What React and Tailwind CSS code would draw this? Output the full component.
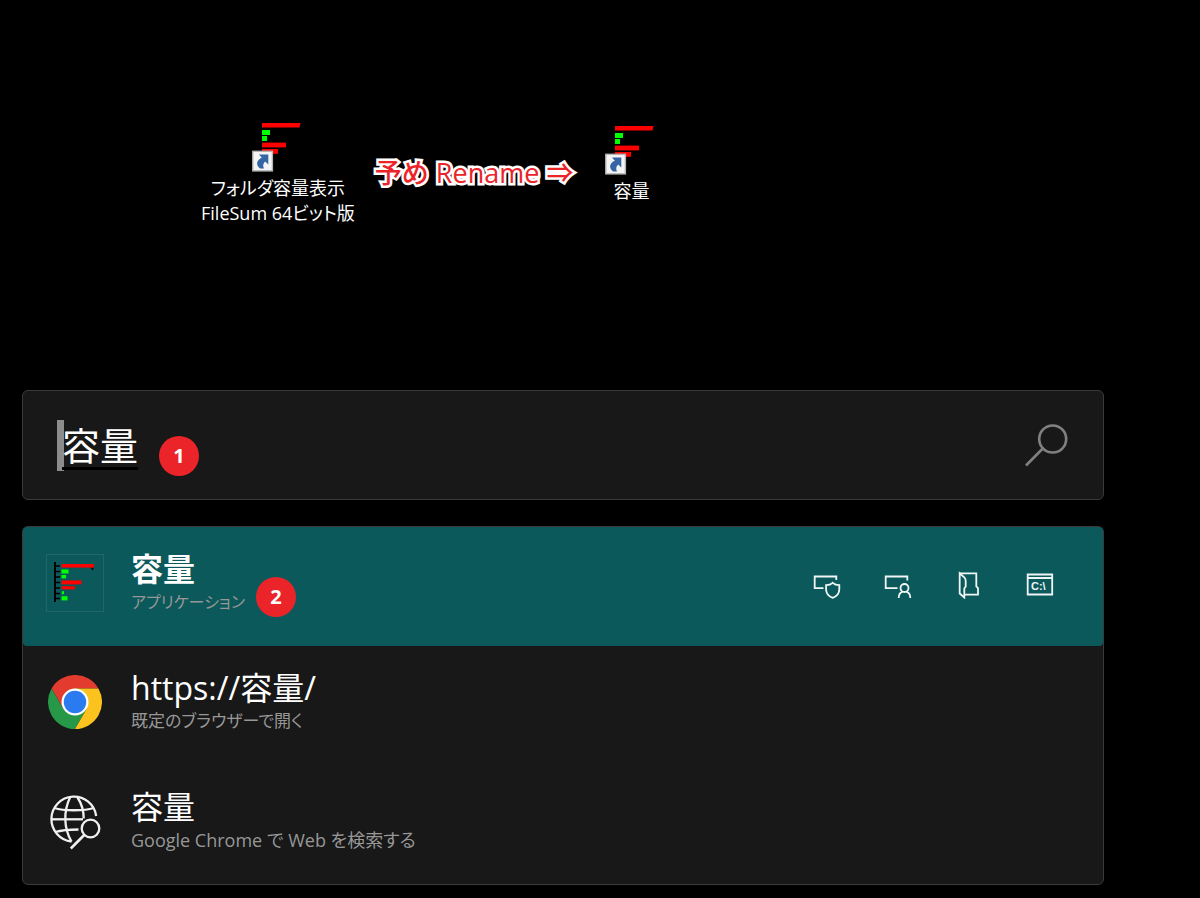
import { useState } from "react";

function FileSumBars() {
  return (
    <svg width="58" height="58" viewBox="0 0 58 58" aria-hidden="true">
      <rect x="0.5" y="0.5" width="57" height="57" fill="none" stroke="#216669" />
      <path d="M9 8V48" stroke="#000" strokeWidth="2" />
      <path
        d="M9 12H14M9 17.500H14M9 23H14M9 28.500H14M9 34H14M9 39.500H14M9 44.500H14"
        stroke="#000"
        strokeWidth="1.500"
      />
      <path d="M44.500 13.500H48L46.500 16.500Z" fill="#000" />
      <rect x="15.500" y="10" width="32.500" height="3.600" fill="#f00" />
      <rect x="15.500" y="15.500" width="7" height="4" fill="#0f0" />
      <rect x="15.500" y="21" width="4.500" height="3.400" fill="#0f0" />
      <rect x="15.500" y="26.400" width="20" height="4" fill="#f00" />
      <rect x="15.500" y="32.200" width="13.500" height="3.200" fill="#f00" />
      <rect x="15.800" y="37.200" width="2.200" height="3" fill="#0f0" />
      <rect x="15.500" y="42.200" width="6" height="4.200" fill="#0f0" />
    </svg>
  );
}

function ShortcutIcon() {
  return (
    <svg width="52" height="50" viewBox="0 0 52 50" aria-hidden="true">
      <path d="M10 1H48.5L47.5 5.6H10Z" fill="#f00" />
      <rect x="10" y="8" width="8" height="5" fill="#0f0" />
      <rect x="10" y="14" width="5" height="5" fill="#0f0" />
      <rect x="10" y="20.6" width="24" height="4.8" fill="#f00" />
      <rect x="10" y="27" width="16" height="4.8" fill="#f00" />
      <rect x="0.8" y="29.3" width="19.6" height="19.6" fill="#f4f4f4" stroke="#b4b4b4" strokeWidth="1.4" />
      <path
        d="M7 32.5H16.3V42.5L13.2 39.4C11 41.3 10.6 43.5 12 46.6H8.2C3.6 43 4.2 38.6 9.8 35.8Z"
        fill="#3465a4"
      />
    </svg>
  );
}

function ChromeLogo() {
  return (
    <svg width="54" height="54" viewBox="0 0 48 48" aria-hidden="true">
      <path d="M3.2 12A24 24 0 0 1 44.8 12H24V24L13.6 30Z" fill="#e33b2e" />
      <path d="M3.2 12L13.6 30L24 24L34.4 30L24 48A24 24 0 0 1 3.2 12Z" fill="#279847" />
      <path d="M44.8 12H24V24L34.4 30L24 48A24 24 0 0 0 44.8 12Z" fill="#fcc31e" />
      <circle cx="24" cy="24" r="12" fill="#fff" />
      <circle cx="24" cy="24" r="10" fill="#2b7bf0" />
    </svg>
  );
}

function WebSearchIcon() {
  return (
    <svg width="58" height="58" viewBox="-2 -2 58 58" fill="none" stroke="#f0f0f0" strokeWidth="2.300" aria-hidden="true">
      <path d="M48.200 22A22.500 22.500 0 1 0 23.500 47.500" />
      <path d="M22 3.500C15.500 17 15.500 34 23.500 47.500" />
      <path d="M29.500 3.500C33.500 9.500 35.700 17 35.700 24.500" />
      <path d="M6.500 14C15 17 37 17 45.500 14" />
      <path d="M3 25.300H35" />
      <path d="M7 38C14 36 22 35.500 30.500 35.500" />
      <circle cx="42.500" cy="34.500" r="8.800" />
      <path d="M36.200 41L22.800 54.500" strokeWidth="2.600" />
    </svg>
  );
}

function SearchIcon() {
  return (
    <svg width="44" height="44" viewBox="0 0 44 44" fill="none" stroke="#808080" strokeWidth="2.600" aria-hidden="true">
      <circle cx="28.700" cy="16" r="13.500" />
      <path d="M18.800 25.500L2 42.500" />
    </svg>
  );
}

function RunAsAdminIcon() {
  return (
    <svg width="28" height="28" viewBox="0 0 28 28" fill="none" stroke="#f0f6f6" strokeWidth="1.800" aria-hidden="true">
      <path d="M23.300 9V5.500H1.700V17.200H10.500" />
      <path d="M19.700 11.800C18 13.400 16 14.200 13.100 14.200V18.500C13.100 22.600 16 25.400 19.700 26.800C23.400 25.400 26.300 22.600 26.300 18.500V14.200C23.400 14.200 21.400 13.400 19.700 11.800Z" />
    </svg>
  );
}

function RunAsUserIcon() {
  return (
    <svg width="28" height="28" viewBox="0 0 28 28" fill="none" stroke="#f0f6f6" strokeWidth="1.800" aria-hidden="true">
      <path d="M23.300 9.500V5.500H1.700V17.200H13.500" />
      <circle cx="20.500" cy="17" r="4" />
      <path d="M14.700 27C14.700 23.700 16.500 21.300 18.700 20.800M22.300 20.800C24.500 21.300 26.300 23.700 26.300 27" />
    </svg>
  );
}

function FolderIcon() {
  return (
    <svg width="28" height="28" viewBox="0 0 28 28" fill="none" stroke="#f0f6f6" strokeWidth="1.800" aria-hidden="true">
      <path d="M4.700 2.300H21.300V15.500L23 17.200V23.700H9.500" />
      <path d="M4.700 2.300L9.500 6.500Q10.700 8 10.700 10V15.500L9.300 17.500V26.500L4.700 22.500Z" />
    </svg>
  );
}

function TerminalIcon() {
  return (
    <svg width="28" height="28" viewBox="0 0 28 28" aria-hidden="true">
      <path d="M1.700 3.500H26.200V23.500H1.700ZM1.700 7H26.200" fill="none" stroke="#f0f6f6" strokeWidth="1.800" />
      <text x="5" y="19" fontSize="11" fontWeight="700" fontFamily="'Liberation Sans', sans-serif" fill="#f0f6f6">
        C:\
      </text>
    </svg>
  );
}

const actions = [
  { label: "管理者として実行", Icon: RunAsAdminIcon },
  { label: "別のユーザーとして実行", Icon: RunAsUserIcon },
  { label: "フォルダーを開く", Icon: FolderIcon },
  { label: "コンソールで開く", Icon: TerminalIcon },
];

const results = [
  {
    id: "app",
    title: "容量",
    subtitle: "アプリケーション",
    subtitleSize: "text-base",
    Icon: FileSumBars,
    badge: "2",
    actions,
  },
  {
    id: "url",
    title: "https://容量/",
    subtitle: "既定のブラウザーで開く",
    subtitleSize: "text-[17px]",
    Icon: ChromeLogo,
  },
  {
    id: "web",
    title: "容量",
    subtitle: "Google Chrome で Web を検索する",
    subtitleSize: "text-lg",
    Icon: WebSearchIcon,
  },
];

function Badge({ children, className }) {
  return (
    <span
      className={`absolute flex h-10 w-10 items-center justify-center rounded-full bg-[#eb2429] text-xl font-bold text-white ${className}`}
    >
      {children}
    </span>
  );
}

function DesktopShortcut({ children }) {
  return (
    <figure className="flex flex-col items-center">
      <ShortcutIcon />
      <figcaption className="mt-1 text-center text-lg leading-[25px] whitespace-nowrap text-white [font-feature-settings:'palt']">
        {children}
      </figcaption>
    </figure>
  );
}

function ResultRow({ result, selected, onSelect }) {
  const { title, subtitle, subtitleSize, Icon, badge } = result;

  return (
    <li className={`flex items-center ${selected ? "rounded-sm bg-[#0c595b]" : ""}`}>
      <button type="button" onClick={onSelect} className="flex flex-1 items-center pt-[23px] pb-[30px] pl-[23px] text-left">
        <span className="flex w-[58px] shrink-0 justify-center">
          <Icon />
        </span>
        <span className="relative ml-[27px] flex flex-col">
          <span className={`text-[32px] leading-[38px] text-white ${selected ? "font-bold" : ""}`}>{title}</span>
          <span className={`leading-7 text-[#979797] [font-feature-settings:'palt'] ${subtitleSize}`}>{subtitle}</span>
          {badge && <Badge className="top-[27px] left-[125px]">{badge}</Badge>}
        </span>
      </button>

      {/* ACTIONS */}
      {result.actions && (
        <div className="flex gap-[43px] pr-[49px] pb-1">
          {result.actions.map(({ label, Icon: ActionIcon }) => (
            <button key={label} type="button" aria-label={label}>
              <ActionIcon />
            </button>
          ))}
        </div>
      )}
    </li>
  );
}

function App() {
  const [query, setQuery] = useState("容量");
  const [selected, setSelected] = useState("app");

  return (
    <main
      lang="ja"
      className="min-h-screen bg-black pr-24 pb-[14px] pl-[22px] font-['Open_Sans','Noto_Sans_CJK_JP',sans-serif]"
    >
      {/* DESKTOP */}
      <section className="flex items-start pt-[122px] pb-[164px] pl-[179px]">
        <DesktopShortcut>
          フォルダ容量表示
          <br />
          FileSum 64ビット版
        </DesktopShortcut>

        <p className="mt-8 ml-5 text-[27px] leading-[38px] font-medium whitespace-nowrap text-[#eb2429] [-webkit-text-stroke:5px_white] [paint-order:stroke_fill]">
          予め Rename ⇒
        </p>

        <div className="mt-[3px] ml-8">
          <DesktopShortcut>容量</DesktopShortcut>
        </div>
      </section>

      {/* SEARCH */}
      <label className="relative flex h-[110px] items-center rounded-md border border-[#3a3a3a] bg-[#181818] pr-[35px] pl-[34px]">
        <span className="h-[51px] w-[7px] shrink-0 bg-[#8c8c8c]" />
        <input
          type="text"
          aria-label="検索"
          value={query}
          onChange={(e) => setQuery(e.target.value)}
          className="-ml-0.5 min-w-0 flex-1 bg-transparent text-[38px] leading-[56px] text-white underline decoration-black decoration-3 underline-offset-7 outline-none"
        />
        <SearchIcon />
        <Badge className="top-[45px] left-34">1</Badge>
      </label>

      {/* RESULTS */}
      <ul className="mt-[26px] rounded-md border border-[#3a3a3a] bg-[#181818]">
        {results.map((result) => (
          <ResultRow
            key={result.id}
            result={result}
            selected={selected === result.id}
            onSelect={() => setSelected(result.id)}
          />
        ))}
      </ul>
    </main>
  );
}

export default App;
